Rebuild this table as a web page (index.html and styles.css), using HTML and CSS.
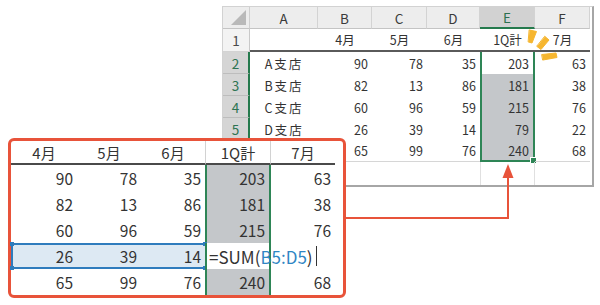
FILE: index.html
```html
<!DOCTYPE html>
<html lang="ja">
<head>
<meta charset="utf-8">
<link rel="stylesheet" href="styles.css">
</head>
<body>
<div class="sheet">
  <div class="corner"></div>
  <div class="ch">A</div><div class="ch">B</div><div class="ch">C</div><div class="ch">D</div><div class="ch sel">E</div><div class="ch">F</div>

  <div class="rh">1</div>
  <div class="c hd"></div><div class="c hd">4月</div><div class="c hd">5月</div><div class="c hd">6月</div><div class="c hd">1Q計</div><div class="c hd">7月</div>

  <div class="rh sel">2</div>
  <div class="c lbl">A支店</div><div class="c">90</div><div class="c">78</div><div class="c">35</div><div class="c e top">203</div><div class="c">63</div>

  <div class="rh sel">3</div>
  <div class="c lbl">B支店</div><div class="c">82</div><div class="c">13</div><div class="c">86</div><div class="c e fill">181</div><div class="c">38</div>

  <div class="rh sel">4</div>
  <div class="c lbl">C支店</div><div class="c">60</div><div class="c">96</div><div class="c">59</div><div class="c e fill">215</div><div class="c">76</div>

  <div class="rh sel">5</div>
  <div class="c lbl">D支店</div><div class="c">26</div><div class="c">39</div><div class="c">14</div><div class="c e fill">79</div><div class="c">22</div>

  <div class="rh sel"></div>
  <div class="c lbl last"></div><div class="c last">65</div><div class="c last">99</div><div class="c last">76</div><div class="c e fill bottom last">240</div><div class="c last">68</div>

  <div class="rh"></div>
  <div class="c"></div><div class="c"></div><div class="c"></div><div class="c"></div><div class="c r7"></div><div class="c"></div>
</div>

<div class="callout">
  <div class="zh">4月</div><div class="zh">5月</div><div class="zh">6月</div><div class="zh sep">1Q計</div><div class="zh">7月</div>

  <div class="z">90</div><div class="z">78</div><div class="z">35</div><div class="z q">203</div><div class="z">63</div>
  <div class="z">82</div><div class="z">13</div><div class="z">86</div><div class="z q">181</div><div class="z">38</div>
  <div class="z">60</div><div class="z">96</div><div class="z">59</div><div class="z q">215</div><div class="z">76</div>
  <div class="z blue first">26</div><div class="z blue">39</div><div class="z blue end">14</div><div class="z q formula">=SUM(<span class="ref">B5:D5</span>)<span class="caret"></span></div><div class="z"></div>
  <div class="z">65</div><div class="z">99</div><div class="z">76</div><div class="z q">240</div><div class="z">68</div>
</div>

<svg class="overlay" width="600" height="305" viewBox="0 0 600 305">
  <path d="M346 218 H508 V176" fill="none" stroke="#e8533a" stroke-width="2"/>
  <polygon points="508,164 502.5,178 513.5,178" fill="#e8533a"/>
  <g stroke="#f6b62f" stroke-linecap="round" fill="#f6b62f">
    <polygon points="529.5,30 536.5,31.5 532,43 528.5,42" stroke-width="1"/>
    <polygon points="545,36.5 549,40 541,49.5 537,46.5" stroke-width="1"/>
    <polygon points="542,54.5 556,53 557,57.5 543,60" stroke-width="1"/>
  </g>
</svg>
</body>
</html>
```
FILE: styles.css
```css
* { box-sizing: border-box; }

body {
  margin: 0;
  width: 600px;
  height: 305px;
  position: relative;
  overflow: hidden;
  background: #ffffff;
  color: #333333;
  font-family: "Noto Sans CJK JP", "Noto Sans", sans-serif;
}

/* ---------- spreadsheet window ---------- */
.sheet {
  margin: 6px 0 0 222px;
  width: 372px;
  display: grid;
  grid-template-columns: 27px 68px 54px 55px 53px 55px 55px;
  grid-template-rows: 22px 23px repeat(5, 22px) 23px;
  border-top: 1px solid #d2d2d2;
  border-left: 1px solid #d2d2d2;
  border-right: 2px solid #a6a6a6;
  border-bottom: 2px solid #a6a6a6;
  padding-right: 1px;
}

.corner {
  background: #ededed;
  border-right: 1px solid #d0d0d0;
  border-bottom: 1px solid #c4c4c4;
  position: relative;
}
.corner::after {
  content: "";
  position: absolute;
  right: 3px;
  bottom: 3px;
  width: 0;
  height: 0;
  border-left: 15px solid transparent;
  border-bottom: 15px solid #b9b9b9;
}

.ch {
  background: #ededed;
  border-right: 1px solid #d3d3d3;
  border-bottom: 1px solid #c4c4c4;
  display: flex;
  align-items: center;
  justify-content: center;
  font-size: 13.5px;
  color: #3a3a3a;
}
.ch.sel {
  background: #d2d2d2;
  color: #2b7050;
  border-bottom: 2px solid #257a4d;
}

.rh {
  background: #f3f3f3;
  border-right: 1px solid #c9c9c9;
  border-bottom: 1px solid #d3d3d3;
  display: flex;
  align-items: center;
  justify-content: center;
  font-size: 13.5px;
  color: #4a4a4a;
}
.rh.sel {
  background: #d5d5d5;
  color: #2d7452;
  border-right: 2px solid #257a4d;
  border-bottom: 1px solid #bdbdbd;
}

.c {
  display: flex;
  align-items: center;
  justify-content: flex-end;
  padding-right: 4px;
  font-size: 12.5px;
  color: #333333;
  position: relative;
}
.c.lbl {
  justify-content: center;
  padding-right: 0;
  letter-spacing: 2px;
}
.c.hd {
  justify-content: center;
  padding-right: 0;
  border-bottom: 2px solid #5a5a5a;
}
.c.last { border-bottom: 1px solid #d6d6d6; }
.c.r7 {
  border-left: 1px solid #e0e0e0;
  border-right: 1px solid #e0e0e0;
}

.c.e {
  border-left: 2px solid #2e8556;
  border-right: 2px solid #2e8556;
}
.c.fill { background: #c4c7ca; }
.c.bottom { border-bottom: 2px solid #2e8556; }
.c.bottom::after {
  content: "";
  position: absolute;
  right: -4px;
  bottom: -4px;
  width: 5px;
  height: 5px;
  background: #2e8556;
  border: 1px solid #ffffff;
}

/* ---------- zoomed callout ---------- */
.callout {
  position: absolute;
  left: 8px;
  top: 138px;
  width: 338px;
  height: 160px;
  border: 3px solid #e8533a;
  border-radius: 6px;
  background: #ffffff;
  display: grid;
  grid-template-columns: 66px 64px 64px 66px 64px;
  grid-template-rows: 24px repeat(5, 26px);
}

.zh {
  display: flex;
  align-items: center;
  justify-content: center;
  font-size: 15px;
  color: #333333;
  border-bottom: 2px solid #4a4a4a;
}
.zh.sep {
  border-left: 1px solid #d2d2d2;
  border-right: 1px solid #d2d2d2;
}

.z {
  display: flex;
  align-items: center;
  justify-content: flex-end;
  padding-right: 4px;
  font-size: 15.5px;
  color: #333333;
  position: relative;
}
.z.q {
  background: #c4c7ca;
  border-left: 2px solid #2e8556;
  border-right: 2px solid #2e8556;
}
.z.blue {
  background: #dde9f3;
  border-top: 2px solid #2f7cbd;
  border-bottom: 2px solid #2f7cbd;
}
.z.first { border-left: 2px solid #2f7cbd; }
.z.first::before,
.z.first::after,
.z.end::before,
.z.end::after {
  content: "";
  position: absolute;
  width: 4px;
  height: 4px;
  background: #2f7cbd;
}
.z.first::before { left: -3px; top: -3px; }
.z.first::after { left: -3px; bottom: -3px; }
.z.end::before { right: -2px; top: -3px; }
.z.end::after { right: -2px; bottom: -3px; }

.z.formula {
  background: #ffffff;
  justify-content: flex-start;
  padding-right: 0;
  padding-left: 2px;
  font-size: 17px;
  white-space: nowrap;
  overflow: visible;
  z-index: 2;
}
.ref { color: #2f86c4; }
.caret {
  display: inline-block;
  width: 0;
  height: 20px;
  margin-left: 3px;
  border-left: 1.5px solid #333333;
}

/* ---------- arrow & emphasis marks ---------- */
.overlay {
  position: absolute;
  left: 0;
  top: 0;
  pointer-events: none;
}
```
